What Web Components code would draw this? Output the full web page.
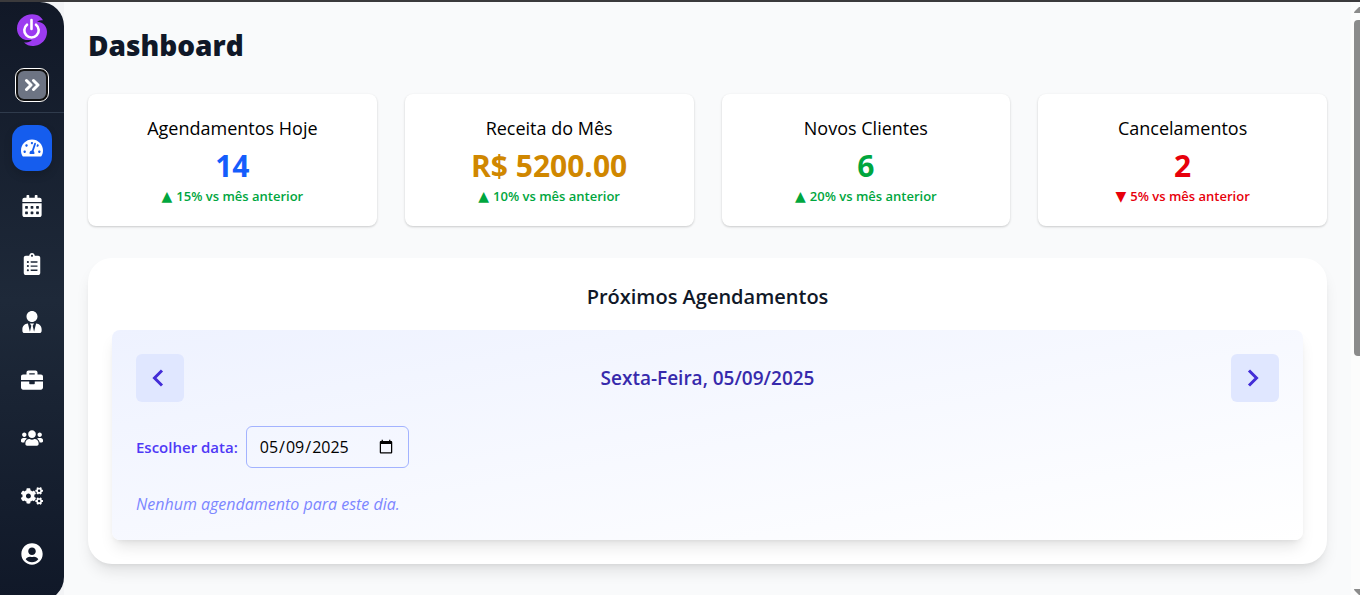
<!DOCTYPE html>
<html lang="pt-BR">
<head>
<meta charset="utf-8">
<title>Dashboard</title>
<style>
  body { margin: 0; overflow: hidden; background: #f9fafb; color: #111; font-family: "Open Sans", "Noto Sans", sans-serif; }
</style>
</head>
<body>
<app-shell>
  <side-bar slot="nav"></side-bar>
  <page-title>Dashboard</page-title>
  <stat-grid>
    <stat-card tone="blue" trend="up"><span slot="label">Agendamentos Hoje</span><span slot="value">14</span><span slot="trend">15% vs mês anterior</span></stat-card>
    <stat-card tone="gold" trend="up"><span slot="label">Receita do Mês</span><span slot="value">R$ 5200.00</span><span slot="trend">10% vs mês anterior</span></stat-card>
    <stat-card tone="green" trend="up"><span slot="label">Novos Clientes</span><span slot="value">6</span><span slot="trend">20% vs mês anterior</span></stat-card>
    <stat-card tone="red" trend="down"><span slot="label">Cancelamentos</span><span slot="value">2</span><span slot="trend">5% vs mês anterior</span></stat-card>
  </stat-grid>
  <section-panel>
    <span slot="title">Próximos Agendamentos</span>
    <day-agenda day="Sexta-Feira, 05/09/2025">Nenhum agendamento para este dia.</day-agenda>
  </section-panel>
  <scroll-rail slot="rail"></scroll-rail>
</app-shell>

<script>
const define = (name, html, setup) => {
  const template = document.createElement('template');
  template.innerHTML = '<style>*{box-sizing:border-box}</style>' + html;
  customElements.define(name, class extends HTMLElement {
    constructor() {
      super();
      this.attachShadow({ mode: 'open' }).append(template.content.cloneNode(true));
    }
    connectedCallback() { if (setup) setup(this, this.shadowRoot); }
  });
};

const smallCog = 'M512.1 191l-8.2 14.3c-3 5.3-9.4 7.5-15.1 5.4-11.8-4.4-22.6-10.7-32.1-18.6-4.6-3.8-5.8-10.5-2.8-15.7l8.2-14.3c-6.9-8-12.3-17.3-15.9-27.4h-16.5c-6 0-11.2-4.3-12.2-10.3-2-12-2.1-24.6 0-37.1 1-6 6.2-10.4 12.2-10.4h16.5c3.6-10.1 9-19.4 15.9-27.4l-8.2-14.3c-3-5.2-1.9-11.9 2.8-15.7 9.5-7.9 20.4-14.2 32.1-18.6 5.7-2.1 12.1.1 15.1 5.4l8.2 14.3c10.5-1.9 21.2-1.9 31.7 0L552 6.3c3-5.3 9.4-7.5 15.1-5.4 11.8 4.4 22.6 10.7 32.1 18.6 4.6 3.8 5.8 10.5 2.8 15.7l-8.2 14.3c6.9 8 12.3 17.3 15.9 27.4h16.5c6 0 11.2 4.3 12.2 10.3 2 12 2.1 24.6 0 37.1-1 6-6.2 10.4-12.2 10.4h-16.5c-3.6 10.1-9 19.4-15.9 27.4l8.2 14.3c3 5.2 1.9 11.9-2.8 15.7-9.5 7.9-20.4 14.2-32.1 18.6-5.7 2.1-12.1-.1-15.1-5.4l-8.2-14.3c-10.4 1.9-21.2 1.9-31.7 0zm-10.5-58.8c38.5 29.6 82.4-14.3 52.8-52.8-38.5-29.7-82.4 14.3-52.8 52.8z';
const square = (x, y) => `M${x} ${y}c0-6.6 5.4-12 12-12h40c6.6 0 12 5.4 12 12v40c0 6.6-5.4 12-12 12h-40c-6.6 0-12-5.4-12-12z`;
const bullet = y => `M96 ${y}c-13.3 0-24-10.7-24-24s10.7-24 24-24 24 10.7 24 24-10.7 24-24 24z`;
const rule = y => `M320 ${y}c0 4.4-3.6 8-8 8H168c-4.4 0-8-3.6-8-8v-16c0-4.4 3.6-8 8-8h144c4.4 0 8 3.6 8 8z`;
const icons = {
  gauge: [576, '<path d="M288 32C128.94 32 0 160.94 0 320c0 52.8 14.25 102.26 39.06 144.8 5.61 9.62 16.3 15.2 27.44 15.2h443c11.14 0 21.83-5.58 27.44-15.2C561.75 422.26 576 372.8 576 320c0-159.06-128.94-288-288-288zm0 64c14.71 0 26.58 10.13 30.32 23.65-1.11 2.26-2.64 4.23-3.45 6.67l-9.22 27.67c-5.13 3.49-10.97 6.01-17.64 6.01-17.67 0-32-14.33-32-32S270.33 96 288 96zM96 384c-17.67 0-32-14.33-32-32s14.33-32 32-32 32 14.33 32 32-14.33 32-32 32zm48-160c-17.67 0-32-14.33-32-32s14.33-32 32-32 32 14.33 32 32-14.33 32-32 32zm246.77-72.41l-61.33 184C343.13 347.33 352 364.54 352 384c0 11.72-3.38 22.55-8.88 32H232.88c-5.5-9.45-8.88-20.28-8.88-32 0-33.94 26.5-61.43 59.9-63.59l61.34-184.01c4.17-12.56 17.73-19.45 30.36-15.17 12.57 4.19 19.35 17.79 15.17 30.36zm14.66 57.2l15.52-46.55c3.47-1.29 7.13-2.23 11.05-2.23 17.67 0 32 14.33 32 32s-14.33 32-32 32c-11.38-.01-20.89-6.28-26.57-15.22zM480 384c-17.67 0-32-14.33-32-32s14.33-32 32-32 32 14.33 32 32-14.33 32-32 32z"/>'],
  calendar: [448, `<path fill-rule="evenodd" d="M0 464c0 26.5 21.5 48 48 48h352c26.5 0 48-21.5 48-48V192H0zM400 64h-48V16c0-8.8-7.2-16-16-16h-32c-8.8 0-16 7.2-16 16v48H160V16c0-8.8-7.2-16-16-16h-32c-8.8 0-16 7.2-16 16v48H48C21.5 64 0 85.5 0 112v48h448v-48c0-26.5-21.5-48-48-48z${[64, 192, 320].map(x => square(x, 268) + square(x, 396)).join('')}"/>`],
  clipboard: [384, `<path fill-rule="evenodd" d="M336 64h-80c0-35.3-28.7-64-64-64s-64 28.7-64 64H48C21.5 64 0 85.5 0 112v352c0 26.5 21.5 48 48 48h288c26.5 0 48-21.5 48-48V112c0-26.5-21.5-48-48-48zM192 40c13.3 0 24 10.7 24 24s-10.7 24-24 24-24-10.7-24-24 10.7-24 24-24z${[232, 328, 424].map(bullet).join('')}${[216, 312, 408].map(rule).join('')}"/>`],
  person: [448, '<path d="M224 256c70.7 0 128-57.3 128-128S294.7 0 224 0 96 57.3 96 128s57.3 128 128 128zm95.8 32.6L272 480l-32-136 32-56h-96l32 56-32 136-47.8-191.4C56.9 292 0 350.3 0 422.4V464c0 26.5 21.5 48 48 48h352c26.5 0 48-21.5 48-48v-41.6c0-72.1-56.9-130.4-128.2-133.8z"/>'],
  briefcase: [512, '<path d="M320 336c0 8.84-7.16 16-16 16h-96c-8.84 0-16-7.16-16-16v-48H0v144c0 25.6 22.4 48 48 48h416c25.6 0 48-22.4 48-48V288H320v48zm144-208h-80V80c0-25.6-22.4-48-48-48H176c-25.6 0-48 22.4-48 48v48H48c-25.6 0-48 22.4-48 48v80h512v-80c0-25.6-22.4-48-48-48zm-144 0H192V96h128v32z"/>'],
  group: [640, '<path d="M96 224c35.3 0 64-28.7 64-64s-28.7-64-64-64-64 28.7-64 64 28.7 64 64 64zm448 0c35.3 0 64-28.7 64-64s-28.7-64-64-64-64 28.7-64 64 28.7 64 64 64zm32 32h-64c-17.6 0-33.5 7.1-45.1 18.6 40.3 22.1 68.9 62 75.1 109.4h66c17.7 0 32-14.3 32-32v-32c0-35.3-28.7-64-64-64zm-256 0c61.9 0 112-50.1 112-112S381.9 32 320 32 208 82.1 208 144s50.1 112 112 112zm76.8 32h-8.3c-20.8 10-43.9 16-68.5 16s-47.6-6-68.5-16h-8.3C179.6 288 128 339.6 128 403.2V432c0 26.5 21.5 48 48 48h288c26.5 0 48-21.5 48-48v-28.8c0-63.6-51.6-115.2-115.2-115.2zm-223.7-13.4C161.5 263.1 145.6 256 128 256H64c-35.3 0-64 28.7-64 64v32c0 17.7 14.3 32 32 32h65.9c6.3-47.4 34.9-87.3 75.2-109.4z"/>'],
  cogs: [640, `<path d="${smallCog}"/><path transform="translate(0 299)" d="${smallCog}"/><path d="M386.3 286.1l33.7 16.8c10.1 5.8 14.5 18.1 10.5 29.1-8.9 24.2-26.4 46.4-42.6 65.8-7.4 8.9-20.2 11.1-30.3 5.3l-29.1-16.8c-16 13.7-34.6 24.6-54.9 31.7v33.6c0 11.6-8.3 21.6-19.7 23.6-24.6 4.2-50.4 4.4-75.9 0-11.5-2-20-11.9-20-23.6V418c-20.3-7.2-38.9-18-54.9-31.7L74 403c-10 5.8-22.9 3.6-30.3-5.3-16.2-19.4-33.3-41.6-42.2-65.7-4-10.9.4-23.2 10.5-29.1l33.3-16.8c-3.9-20.9-3.9-42.4 0-63.4L12 205.8c-10.1-5.8-14.6-18.1-10.5-29 8.9-24.2 26-46.4 42.2-65.8 7.4-8.9 20.2-11.1 30.3-5.3l29.1 16.8c16-13.7 34.6-24.6 54.9-31.7V57.1c0-11.5 8.2-21.5 19.6-23.5 24.6-4.2 50.5-4.4 76-.1 11.5 2 20 11.9 20 23.6v33.6c20.3 7.2 38.9 18 54.9 31.7l29.1-16.8c10-5.8 22.9-3.6 30.3 5.3 16.2 19.4 33.2 41.6 42.1 65.8 4 10.9.1 23.2-10 29.1l-33.7 16.8c3.9 21 3.9 42.5 0 63.5zm-117.6 21.1c59.2-77-28.7-164.9-105.7-105.7-59.2 77 28.7 164.9 105.7 105.7z"/>`],
  account: [496, '<path d="M248 8C111 8 0 119 0 256s111 248 248 248 248-111 248-248S385 8 248 8zm0 96c48.6 0 88 39.4 88 88s-39.4 88-88 88-88-39.4-88-88 39.4-88 88-88zm0 344c-58.7 0-111.3-26.6-146.5-68.2 18.8-35.4 55.6-59.8 98.5-59.8 2.4 0 4.8.4 7.1 1.1 13 4.2 26.6 6.9 40.9 6.9 14.3 0 28-2.7 40.9-6.9 2.3-.7 4.7-1.1 7.1-1.1 42.9 0 79.7 24.4 98.5 59.8C359.3 421.4 306.7 448 248 448z"/>'],
};

define('app-shell', `
<style>
  :host { display: flex; flex-direction: column; height: 100vh; overflow: hidden; border-top: 2px solid #3b3a3c; box-sizing: border-box; }
  .row { display: flex; flex: 1; min-height: 0; align-items: flex-start; }
  main { flex: 1; min-width: 0; padding: 24px; }
  .side { background: #f3f4f6; flex: none; }
</style>
<div class="row"><div class="side"><slot name="nav"></slot></div><main><slot></slot></main><slot name="rail"></slot></div>`);

define('nav-item', `
<style>
  :host { display: block; }
  a { display: flex; width: 40px; height: 46px; align-items: center; justify-content: center; border-radius: 14px; color: #fff; }
  :host([active]) a { background: #155dee; box-shadow: 0 4px 8px rgba(0,0,0,.15); }
  svg { width: 22px; height: 22px; fill: currentColor; }
</style>
<a href="#"><svg></svg></a>`, (host, root) => {
  const [width, body] = icons[host.getAttribute('icon')];
  const svg = root.querySelector('svg');
  svg.setAttribute('viewBox', `0 0 ${width} 512`);
  svg.innerHTML = body;
  root.querySelector('a').setAttribute('aria-label', host.getAttribute('name'));
});

define('side-bar', `
<style>
  :host { display: flex; flex-direction: column; width: 64px; padding-bottom: 24px; box-sizing: border-box;
    background: linear-gradient(#111827, #1e2939 50%, #101828); border-radius: 0 24px 24px 0; }
  header { display: flex; flex-direction: column; align-items: center; gap: 20px; padding: 12px 0 10px; border-bottom: 1px solid #2f3b4c; }
  button { display: flex; align-items: center; justify-content: center; width: 34px; height: 34px; padding: 0;
    background: #6d7483; border: 3px solid #111; border-radius: 9px; outline: 1px solid #fff; outline-offset: -1px; }
  nav { display: flex; flex-direction: column; gap: 12px; align-items: center; padding-top: 12px; }
</style>
<header>
  <svg width="32" height="34" viewBox="0 0 32 34" aria-hidden="true">
    <path fill="#9c3bf0" d="M21 1C12-2 1 4 1 14.500c0 6 4 10.500 9 11.500h6c-2 2-4 2.500-8 2.500 3 3 7 4 11 3.300 7-1 12-6.800 12-13.800 0-5-3-9-8-10l-2-.5c2-1 4-1.500 6-1.200C25.500 3.500 23.500 1.800 21 1z"/>
    <path fill="none" stroke="#fff" stroke-width="2.600" stroke-linecap="round" d="M11 10.700a7.200 7.200 0 1 0 9 0M15.500 6v9"/>
  </svg>
  <button aria-label="Expandir menu"><svg width="16" height="14" viewBox="0 0 16 14" fill="none" stroke="#fff" stroke-width="3" stroke-linecap="round" stroke-linejoin="round"><path d="M2.500 2.500L7 7l-4.500 4.500M9.500 2.500L14 7l-4.500 4.500"/></svg></button>
</header>
<nav>
  <nav-item icon="gauge" name="Dashboard" active></nav-item>
  <nav-item icon="calendar" name="Agenda"></nav-item>
  <nav-item icon="clipboard" name="Agendamentos"></nav-item>
  <nav-item icon="person" name="Profissionais"></nav-item>
  <nav-item icon="briefcase" name="Serviços"></nav-item>
  <nav-item icon="group" name="Clientes"></nav-item>
  <nav-item icon="cogs" name="Configurações"></nav-item>
  <nav-item icon="account" name="Perfil"></nav-item>
</nav>`);

define('page-title', `
<style>
  :host { display: block; margin-bottom: 30px; }
  h1 { margin: 0; font-size: 28px; line-height: 38px; font-weight: 800; color: #101828; }
</style>
<h1><slot></slot></h1>`);

define('stat-grid', `
<style>
  :host { display: grid; grid-template-columns: repeat(4, 1fr); gap: 28px; margin-bottom: 32px; }
</style>
<slot></slot>`);

define('stat-card', `
<style>
  :host { display: flex; flex-direction: column; align-items: center; padding: 20px; background: #fff; border-radius: 8px;
    box-shadow: 0 1px 3px rgba(0,0,0,.1), 0 1px 2px rgba(0,0,0,.1); --trend: #00a63e; }
  :host([tone=blue]) { --tone: #155dfc; }
  :host([tone=gold]) { --tone: #d08700; }
  :host([tone=green]) { --tone: #00a63e; }
  :host([tone=red]) { --tone: #e7000b; --trend: #e7000b; }
  h2 { margin: 0 0 4px; font-size: 18px; line-height: 28px; font-weight: 500; color: #000; }
  .value { font-size: 30px; line-height: 40px; font-weight: 700; color: var(--tone); }
  .trend { display: flex; align-items: baseline; gap: 4px; font-size: 13px; line-height: 20px; font-weight: 600; color: var(--trend); }
  #mark { font-family: "DejaVu Sans", sans-serif; font-size: 14px; font-weight: 400; }
</style>
<h2><slot name="label"></slot></h2>
<div class="value"><slot name="value"></slot></div>
<div class="trend"><span id="mark"></span><slot name="trend"></slot></div>`, (host, root) => {
  root.getElementById('mark').textContent = host.getAttribute('trend') === 'up' ? '▲' : '▼';
});

define('section-panel', `
<style>
  :host { display: block; padding: 24px; background: #fff; border-radius: 24px;
    box-shadow: 0 10px 15px -3px rgba(0,0,0,.1), 0 4px 6px -4px rgba(0,0,0,.1); }
  h2 { margin: 0 0 18px; font-size: 20px; line-height: 30px; font-weight: 600; text-align: center; color: #101828; }
</style>
<h2><slot name="title"></slot></h2>
<slot></slot>`);

define('day-agenda', `
<style>
  :host { display: flex; flex-direction: column; gap: 24px; padding: 24px; border-radius: 8px;
    background: linear-gradient(to bottom right, #eef2ff, #fff);
    box-shadow: 0 10px 15px -3px rgba(0,0,0,.1), 0 4px 6px -4px rgba(0,0,0,.1); }
  .head, .pick { display: flex; align-items: center; }
  .head { justify-content: space-between; }
  .pick { gap: 8px; }
  button { width: 48px; height: 48px; padding: 0 4px 0 0; border: 0; border-radius: 6px; background: #e0e7ff; color: #432dd7; display: flex; align-items: center; justify-content: center; }
  h3 { margin: 0; font-size: 19px; line-height: 28px; font-weight: 600; color: #372aac; }
  label { font-size: 15px; line-height: 24px; font-weight: 600; color: #4f39f6; }
  input { width: 163px; height: 42px; padding: 8px 12px; font: inherit; font-size: 16px; color: #000; background: none; border: 1px solid #a3b3ff; border-radius: 6px; }
  p { margin: 0; font-size: 16px; line-height: 24px; font-style: italic; color: #7c86ff; }
</style>
<div class="head">
  <button aria-label="Dia anterior"><svg width="14" height="18" viewBox="0 0 14 18" fill="none" stroke="currentColor" stroke-width="3"><path d="M11 1.500L3.500 9l7.500 7.500"/></svg></button>
  <h3></h3>
  <button aria-label="Próximo dia"><svg width="14" height="18" viewBox="0 0 14 18" fill="none" stroke="currentColor" stroke-width="3"><path d="M3 1.500L10.500 9 3 16.500"/></svg></button>
</div>
<div class="pick"><label for="date">Escolher data:</label><input id="date" type="date" value="2025-05-09"></div>
<p><slot></slot></p>`, (host, root) => { root.querySelector('h3').textContent = host.getAttribute('day'); });

define('scroll-rail', `
<style>
  :host { display: flex; flex-direction: column; align-self: stretch; width: 9px; padding: 5px 0 0 3px; box-sizing: border-box; background: #fcfcfc; overflow: hidden; }
  svg { display: block; flex: none; width: 12px; height: 6px; fill: #8b8b8b; }
  .track { flex: 1; padding-top: 7px; }
  .thumb { height: 59%; width: 12px; border-radius: 4px; background: #8b8b8b; }
</style>
<svg viewBox="0 0 12 6"><path d="M0 6Q0 5 1 4L5 0h2l4 4q1 1 1 2z"/></svg>
<div class="track"><div class="thumb"></div></div>
<svg viewBox="0 0 12 6"><path d="M0 0h12q0 1-1 2L7 6H5L1 2Q0 1 0 0z"/></svg>`);
</script>
</body>
</html>
